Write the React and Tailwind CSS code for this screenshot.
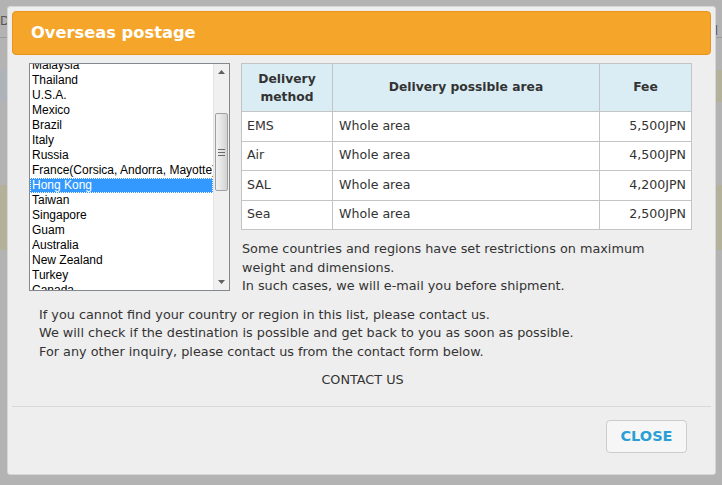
import React from 'react';

const countries = [
  'Malaysia', 'Thailand', 'U.S.A.', 'Mexico', 'Brazil', 'Italy', 'Russia',
  'France(Corsica, Andorra, Mayotte)', 'Hong Kong', 'Taiwan', 'Singapore',
  'Guam', 'Australia', 'New Zealand', 'Turkey', 'Canada',
];

const rates = [
  { method: 'EMS', area: 'Whole area', fee: '5,500JPN' },
  { method: 'Air', area: 'Whole area', fee: '4,500JPN' },
  { method: 'SAL', area: 'Whole area', fee: '4,200JPN' },
  { method: 'Sea', area: 'Whole area', fee: '2,500JPN' },
];

const CountryList = () => (
  <div className="flex w-[201px] h-[228px] border border-[#828790] bg-white overflow-hidden">
    <div className="flex-1 overflow-hidden">
      <div className="-mt-[6px] flex flex-col">
        {countries.map((c) => (
          <div
            key={c}
            className={
              c === 'Hong Kong'
                ? 'h-[15px] leading-[15px] pl-[2px] whitespace-nowrap bg-[#3399ff] text-white outline-1 outline-dotted outline-white -outline-offset-1'
                : 'h-[15px] leading-[15px] pl-[2px] whitespace-nowrap text-black'
            }
          >
            {c}
          </div>
        ))}
      </div>
    </div>
    <div className="w-[16px] flex flex-col bg-[#f0f0f0] border-l border-[#e4e4e4]">
      <div className="h-[16px] flex items-center justify-center">
        <svg width="7" height="4" viewBox="0 0 7 4"><path d="M3.5 0 L7 4 L0 4 Z" fill="#606060" /></svg>
      </div>
      <div className="h-[33px]" />
      <div className="h-[78px] mx-[1px] rounded-[2px] border border-[#a0a0a0] bg-gradient-to-r from-[#f2f2f2] via-[#e4e4e4] to-[#d2d2d2] flex flex-col items-center justify-center gap-[2px]">
        <div className="w-[7px] h-px bg-[#6a6a6a]" />
        <div className="w-[7px] h-px bg-[#6a6a6a]" />
        <div className="w-[7px] h-px bg-[#6a6a6a]" />
      </div>
      <div className="flex-1" />
      <div className="h-[16px] flex items-center justify-center">
        <svg width="7" height="4" viewBox="0 0 7 4"><path d="M0 0 L7 0 L3.5 4 Z" fill="#606060" /></svg>
      </div>
    </div>
  </div>
);

const RateTable = () => (
  <table className="w-[451px] border-collapse text-[12.6px] text-[#333]">
    <thead>
      <tr className="bg-[#daedf5] h-[48px] text-[12.3px]">
        <th className="w-[91px] border border-[#c4c4c4] leading-[18px] font-bold">Delivery<br />method</th>
        <th className="w-[267px] border border-[#c4c4c4] font-bold">Delivery possible area</th>
        <th className="border border-[#c4c4c4] font-bold">Fee</th>
      </tr>
    </thead>
    <tbody>
      {rates.map((r) => (
        <tr key={r.method} className="bg-white h-[29.5px]">
          <td className="border border-[#c4c4c4] pl-[5px]">{r.method}</td>
          <td className="border border-[#c4c4c4] pl-[6px]">{r.area}</td>
          <td className="border border-[#c4c4c4] pr-[5px] text-right">{r.fee}</td>
        </tr>
      ))}
    </tbody>
  </table>
);

export default function App() {
  return (
    <div className="relative w-[722px] h-[485px] overflow-hidden bg-[#b3b3b3] font-['DejaVu_Sans',sans-serif]">
      {/* page behind the overlay */}
      <div className="flex flex-col h-full">
        <div className="h-[38px] border-b border-[#9a9a9a] pt-[12px] text-[12px] text-[#555] flex justify-between">
          <span>Da</span>
          <span className="pr-[4px] pt-[10px]">ol</span>
        </div>
        <div className="h-[32px]" />
        <div className="h-[32px] bg-[#aeb2b9] flex justify-end">
          <div className="w-[8px] bg-[#b3b199]" />
        </div>
        <div className="h-[83px]" />
        <div className="h-[65px] bg-[#b3b199]" />
        <div className="flex-1" />
      </div>

      {/* modal overlay */}
      <div className="absolute left-[7px] top-[6px] w-[709px] h-[469px] bg-[#eeeeee] rounded-[3px] border border-[#d6d6d6] flex flex-col p-[4px]">
        <div className="h-[44px] rounded-[4px] bg-[#f5a62a] border border-[#e8941a] flex items-center pl-[18px]">
          <h1 className="text-[16.3px] font-bold text-white">Overseas postage</h1>
        </div>

        <div className="flex gap-[11px] pl-[17px] pt-[8px]">
          <div className="text-[12px] font-['Liberation_Sans',sans-serif]">
            <CountryList />
          </div>
          <div className="flex flex-col">
            <RateTable />
            <div className="pt-[10px] pl-[1px] text-[12.8px] leading-[18.5px] text-[#333]">
              <p>Some countries and regions have set restrictions on maximum<br />weight and dimensions.</p>
              <p>In such cases, we will e-mail you before shipment.</p>
            </div>
          </div>
        </div>

        <div className="pl-[27px] pt-[10px] text-[12.8px] leading-[18.5px] text-[#333]">
          <p>If you cannot find your country or region in this list, please contact us.</p>
          <p>We will check if the destination is possible and get back to you as soon as possible.</p>
          <p>For any other inquiry, please contact us from the contact form below.</p>
        </div>
        <div className="pt-[9px] text-center text-[12.8px] text-[#333] pl-[2px]">CONTACT US</div>

        <div className="mt-[17px] border-t border-[#d8d8d8]" />
        <div className="flex justify-end pr-[24px] pt-[13px]">
          <button className="w-[81px] h-[33px] rounded-[4px] border border-[#cccccc] bg-[#f6f6f6] text-[#2a9fd6] font-bold text-[14.5px]">
            CLOSE
          </button>
        </div>
      </div>
    </div>
  );
}
